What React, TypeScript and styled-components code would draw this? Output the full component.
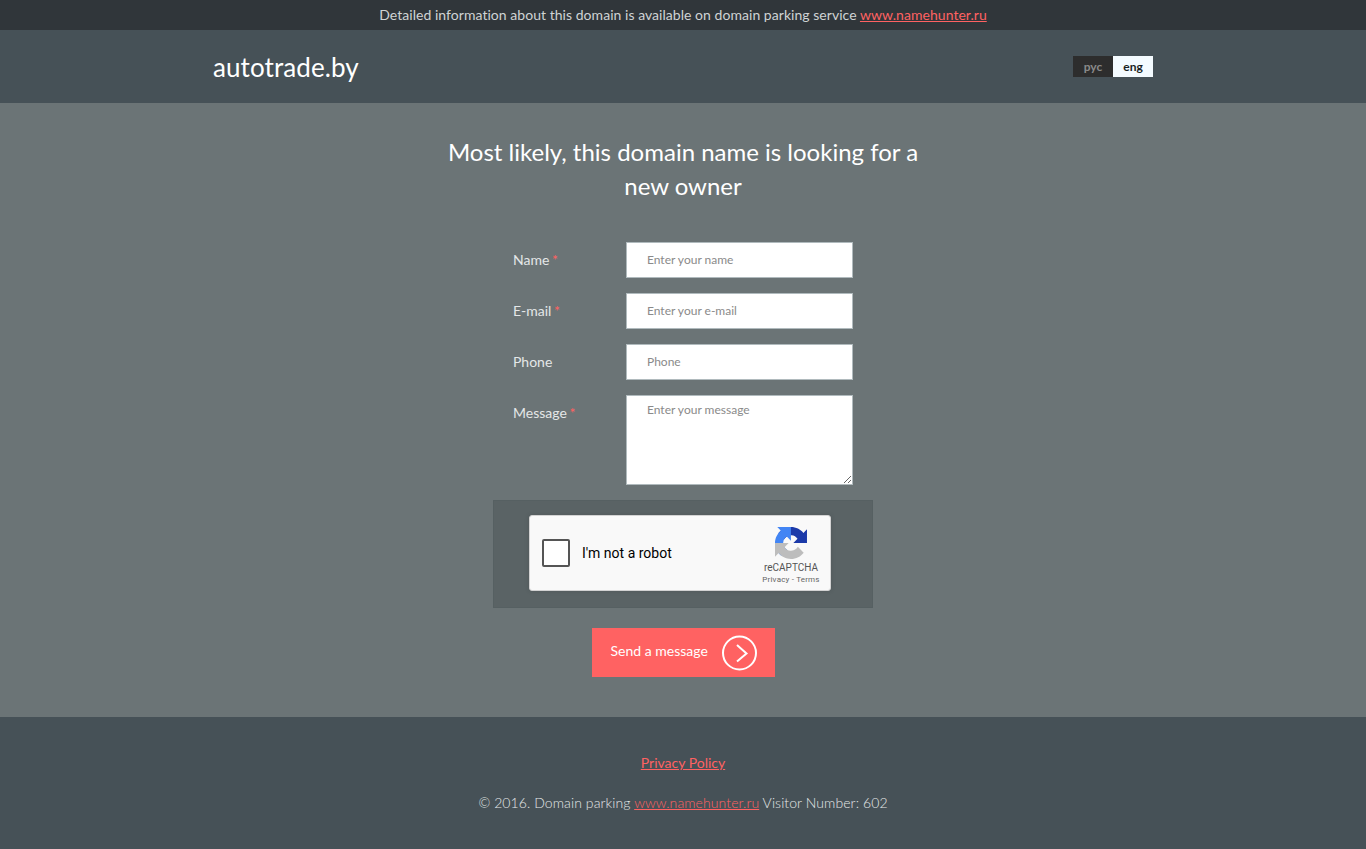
import React from "react";
import styled, { createGlobalStyle } from "styled-components";

const GlobalStyle = createGlobalStyle`
  html, body {
    margin: 0;
    padding: 0;
    background: #465157;
    font-family: Lato, "Open Sans", sans-serif;
  }
  * { box-sizing: border-box; }
`;

const TopBar = styled.div`
  height: 30px;
  background: #30363a;
  color: #cfd3d4;
  font-size: 14px;
  letter-spacing: 0.04px;
  line-height: 30px;
  text-align: center;
`;

const Link = styled.a`
  color: #ff6262;
  text-decoration: underline;
`;

const Header = styled.header`
  height: 73px;
  background: #465157;
`;

const HeaderInner = styled.div`
  width: 940px;
  margin: 0 auto;
  height: 100%;
  display: flex;
  align-items: center;
  justify-content: space-between;
`;

const Logo = styled.a`
  color: #fff;
  font-size: 26px;
  letter-spacing: 0.08px;
  line-height: 32px;
`;

const Lang = styled.div`
  display: flex;
  margin-top: -1px;
`;

const LangItem = styled.span<{ $active?: boolean }>`
  width: 40px;
  height: 21px;
  line-height: 21px;
  text-align: center;
  font-size: 12px;
  font-weight: 700;
  background: ${({ $active }) => ($active ? "#f4fbff" : "#2d2d2d")};
  color: ${({ $active }) => ($active ? "#1a1f22" : "#8a8a8a")};
`;

const Main = styled.main`
  height: 614px;
  background: #6b7476;
  padding-top: 32px;
`;

const Title = styled.h1`
  width: 500px;
  margin: 0 auto 39px;
  color: #fff;
  font-size: 24px;
  font-weight: 400;
  line-height: 34px;
  text-align: center;
`;

const Form = styled.form`
  width: 380px;
  margin: 0 auto;
`;

const Row = styled.div`
  display: flex;
  margin-bottom: 15px;
`;

const Label = styled.label`
  width: 113px;
  margin-left: 20px;
  color: #e4e7e8;
  font-size: 14px;
  line-height: 36px;
`;

const Star = styled.span`
  margin-left: -1px;
  color: #ff6262;
`;

const Input = styled.input`
  width: 227px;
  height: 36px;
  border: 1px solid #b0babd;
  border-radius: 0;
  background: #fff;
  padding: 0 20px 2px;
  font: 12px Lato, sans-serif;
  outline: none;

  &::placeholder {
    color: #8a8a8a;
    opacity: 1;
  }
`;

const TextArea = styled.textarea`
  display: block;
  width: 227px;
  height: 90px;
  border: 1px solid #b0babd;
  border-radius: 0;
  background: #fff;
  padding: 6px 20px;
  font: 12px Lato, sans-serif;
  outline: none;

  &::placeholder {
    color: #8a8a8a;
    opacity: 1;
  }
`;

const CaptchaBox = styled.div`
  height: 108px;
  background: #5a6365;
  border: 1px solid #566062;
  padding: 14px 0 0 35px;
`;

const Captcha = styled.div`
  width: 302px;
  height: 76px;
  background: #f9f9f9;
  border: 1px solid #d3d3d3;
  border-radius: 3px;
  box-shadow: 0 0 4px 1px rgba(0, 0, 0, 0.08);
  display: flex;
  align-items: center;
  padding: 0 9px 0 12px;
  font-family: Roboto, sans-serif;
`;

const CheckBox = styled.div`
  width: 28px;
  height: 28px;
  background: #fff;
  border: 2px solid #555;
  border-radius: 2px;
`;

const CaptchaText = styled.span`
  flex: 1;
  margin-left: 12px;
  color: #000;
  font-size: 14px;
`;

const CaptchaBrand = styled.div`
  width: 60px;
  margin-top: 7px;
  display: flex;
  flex-direction: column;
  align-items: center;
  color: #555;
`;

const BrandName = styled.span`
  font-size: 10px;
  line-height: 12px;
  margin-top: 3px;
`;

const BrandLinks = styled.span`
  font-size: 8px;
  letter-spacing: 0.2px;
  line-height: 12px;
  color: #666;
  white-space: nowrap;
`;

const SubmitWrap = styled.div`
  display: flex;
  justify-content: center;
  margin-top: 20px;
`;

const Submit = styled.button`
  width: 183px;
  height: 49px;
  border: none;
  background: #ff6262;
  color: #fff;
  font: 14px Lato, sans-serif;
  display: flex;
  align-items: center;
  justify-content: space-between;
  padding: 0 18px 0 19px;
`;

const SubmitLabel = styled.span`
  margin-top: -4px;
`;

const Footer = styled.footer`
  height: 132px;
  background: #465157;
  padding-top: 36px;
  text-align: center;
  color: #d4d8d9;
  font-size: 14px;
  line-height: 20px;
`;

const FooterLine = styled.div`
  margin-bottom: 20px;
`;

const FooterLight = styled(FooterLine)`
  color: #e4e7e8;
  font-weight: 300;
  letter-spacing: 0.09px;
`;

const RecaptchaLogo = () => (
  <svg width="32" height="32" viewBox="0 0 64 64">
    <path d="M64 31.955l-.033-1.37V4.687l-7.16 7.16C50.948 4.674 42.033.093 32.05.093c-10.4 0-19.622 4.96-25.458 12.64l11.736 11.86a15.55 15.55 0 0 1 4.754-5.334c2.05-1.6 4.952-2.906 8.968-2.906.485 0 .86.057 1.135.163 4.976.393 9.288 3.14 11.828 7.124l-8.307 8.307 26.2.004" fill="#1c3aa9" />
    <path d="M31.862.094l-1.37.033H4.594l7.16 7.16C4.58 13.147 0 22.06 0 32.046c0 10.4 4.96 19.622 12.64 25.458l11.86-11.736a15.55 15.55 0 0 1-5.334-4.754c-1.6-2.05-2.906-4.952-2.906-8.968 0-.485.057-.86.163-1.135.393-4.976 3.14-9.288 7.124-11.828l8.307 8.307.004-26.2" fill="#4285f4" />
    <path d="M.001 32.045l.033 1.37v25.898l7.16-7.16c5.86 7.173 14.774 11.754 24.76 11.754 10.4 0 19.622-4.96 25.458-12.64L45.676 39.407a15.55 15.55 0 0 1-4.754 5.334c-2.05 1.6-4.952 2.906-8.968 2.906-.485 0-.86-.057-1.135-.163-4.976-.393-9.288-3.14-11.828-7.124l8.307-8.307-26.2-.004" fill="#bdbdbd" />
  </svg>
);

const ArrowCircle = () => (
  <svg width="36" height="36" viewBox="0 0 36 36" fill="none" stroke="#fff" strokeWidth="2">
    <circle cx="18.5" cy="18" r="16.5" />
    <path d="M16 10 L25.5 18.5 L16 26.5" />
  </svg>
);

export default function App() {
  return (
    <>
      <GlobalStyle />
      <TopBar>
        Detailed information about this domain is available on domain parking service <Link href="#">www.namehunter.ru</Link>
      </TopBar>
      <Header>
        <HeaderInner>
          <Logo>autotrade.by</Logo>
          <Lang>
            <LangItem>рус</LangItem>
            <LangItem $active>eng</LangItem>
          </Lang>
        </HeaderInner>
      </Header>
      <Main>
        <Title>Most likely, this domain name is looking for a new owner</Title>
        <Form>
          <Row>
            <Label>Name <Star>*</Star></Label>
            <Input placeholder="Enter your name" />
          </Row>
          <Row>
            <Label>E-mail <Star>*</Star></Label>
            <Input placeholder="Enter your e-mail" />
          </Row>
          <Row>
            <Label>Phone</Label>
            <Input placeholder="Phone" />
          </Row>
          <Row>
            <Label>Message <Star>*</Star></Label>
            <TextArea placeholder="Enter your message" />
          </Row>
          <CaptchaBox>
            <Captcha>
              <CheckBox />
              <CaptchaText>I'm not a robot</CaptchaText>
              <CaptchaBrand>
                <RecaptchaLogo />
                <BrandName>reCAPTCHA</BrandName>
                <BrandLinks>Privacy - Terms</BrandLinks>
              </CaptchaBrand>
            </Captcha>
          </CaptchaBox>
          <SubmitWrap>
            <Submit type="button">
              <SubmitLabel>Send a message</SubmitLabel>
              <ArrowCircle />
            </Submit>
          </SubmitWrap>
        </Form>
      </Main>
      <Footer>
        <FooterLine><Link href="#">Privacy Policy</Link></FooterLine>
        <FooterLight>
          © 2016. Domain parking <Link href="#">www.namehunter.ru</Link> Visitor Number: 602
        </FooterLight>
      </Footer>
    </>
  );
}
